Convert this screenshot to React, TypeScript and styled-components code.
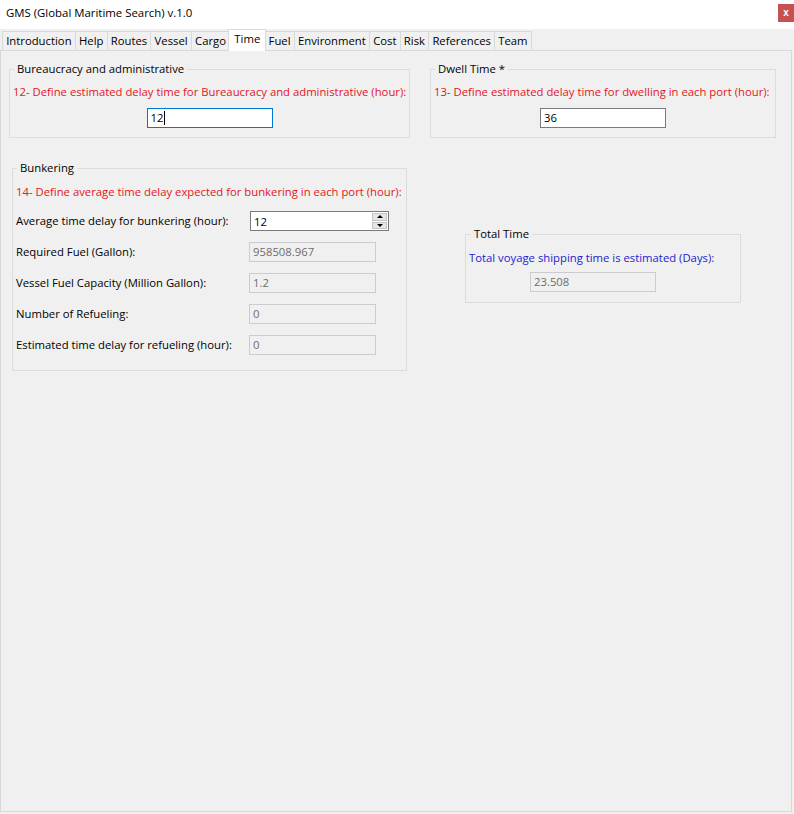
import styled, { createGlobalStyle } from 'styled-components';

const GlobalStyle = createGlobalStyle`
  html, body {
    margin: 0;
    padding: 0;
    background: #f0f0f0;
  }
  body {
    font-family: 'Open Sans', 'Liberation Sans', sans-serif;
    font-size: 11.3px;
    color: #000;
  }
`;

const Window = styled.div`
  width: 794px;
  height: 814px;
  display: flex;
  flex-direction: column;
  background: #f0f0f0;
`;

const TitleBar = styled.div`
  height: 29px;
  background: #fff;
  display: flex;
  align-items: center;
  justify-content: space-between;
  padding: 0 0 0 6px;
  box-sizing: border-box;
`;

const Caption = styled.span`
  font-size: 11.4px;
  line-height: 16px;
  margin-top: -4px;
`;

const CloseButton = styled.div`
  width: 16px;
  height: 18px;
  margin-top: -4px;
  background: #c75050;
  color: #fff;
  font-family: 'Liberation Sans', sans-serif;
  font-size: 10px;
  font-weight: bold;
  display: flex;
  align-items: center;
  justify-content: center;
`;

const TabStrip = styled.div`
  height: 21px;
  display: flex;
  align-items: flex-end;
  padding-left: 2px;
  position: relative;
  z-index: 1;
`;

const Tab = styled.div<{ $active?: boolean }>`
  height: ${({ $active }) => ($active ? 22 : 19)}px;
  margin-bottom: ${({ $active }) => ($active ? -1 : 0)}px;
  margin-left: ${({ $active }) => ($active ? -2 : -1)}px;
  margin-right: ${({ $active }) => ($active ? -1 : 0)}px;
  padding: 0 ${({ $active }) => ($active ? 5.2 : 3.2)}px;
  box-sizing: border-box;
  border: 1px solid #d9d9d9;
  border-bottom: none;
  background: ${({ $active }) => ($active ? '#fff' : '#f0f0f0')};
  line-height: ${({ $active }) => ($active ? 17 : 18)}px;
  white-space: nowrap;
  z-index: ${({ $active }) => ($active ? 2 : 1)};
  position: relative;

  &:first-child {
    margin-left: 0;
  }
`;

const Panel = styled.div`
  width: 792px;
  height: 762px;
  box-sizing: border-box;
  border: 1px solid #d9d9d9;
  display: flex;
  flex-direction: column;
`;

const Row = styled.div`
  display: flex;
  align-items: flex-start;
`;

const Group = styled.fieldset<{ $left: number; $top: number; $width: number; $height: number }>`
  margin: ${({ $top }) => $top}px 0 0 ${({ $left }) => $left}px;
  padding: 0 3px;
  width: ${({ $width }) => $width}px;
  height: ${({ $height }) => $height}px;
  box-sizing: border-box;
  border: 1px solid #dcdcdc;
  min-width: 0;
  display: flex;
  flex-direction: column;
`;

const Legend = styled.legend<{ $shift?: number }>`
  padding: 0 3px;
  margin-left: ${({ $shift }) => $shift ?? 1}px;
  line-height: 16px;
  font-size: 11.3px;
`;

const Prompt = styled.div<{ $tone: 'red' | 'blue'; $gap: number }>`
  margin-top: ${({ $gap }) => $gap}px;
  line-height: 16px;
  color: ${({ $tone }) => ($tone === 'red' ? '#e3151f' : '#1c1ccf')};
  white-space: nowrap;
`;

const TextBox = styled.div<{ $state?: 'focused' | 'normal' | 'disabled'; $width: number }>`
  width: ${({ $width }) => $width}px;
  height: 20px;
  box-sizing: border-box;
  padding: 0 3px;
  line-height: 18px;
  white-space: nowrap;
  border: 1px solid
    ${({ $state }) => ($state === 'focused' ? '#0078d7' : $state === 'disabled' ? '#cccccc' : '#7a7a7a')};
  background: ${({ $state }) => ($state === 'disabled' ? '#f0f0f0' : '#fff')};
  color: ${({ $state }) => ($state === 'disabled' ? '#6d6d6d' : '#000')};
  display: flex;
  align-items: center;
`;

const CenteredBox = styled.div<{ $gap: number }>`
  margin-top: ${({ $gap }) => $gap}px;
  display: flex;
  justify-content: center;
`;

const OffsetBox = styled.div<{ $gap: number; $left: number }>`
  margin-top: ${({ $gap }) => $gap}px;
  padding-left: ${({ $left }) => $left}px;
`;

const Caret = styled.span`
  display: inline-block;
  width: 1px;
  height: 14px;
  background: #000;
  margin-left: 1px;
`;

const FieldGrid = styled.div`
  margin-top: 11px;
  display: grid;
  grid-template-columns: 233px auto;
  row-gap: 11px;
  align-items: center;
`;

const FieldLabel = styled.div`
  line-height: 20px;
  white-space: nowrap;
`;

const SpinBox = styled.div`
  width: 139px;
  height: 20px;
  margin-left: 1px;
  box-sizing: border-box;
  border: 1px solid #7a7a7a;
  background: #fff;
  display: flex;
  justify-content: space-between;
  align-items: center;
  padding: 0 1px 0 3px;
`;

const SpinButtons = styled.div`
  width: 15px;
  height: 16px;
  display: flex;
  flex-direction: column;
  gap: 1px;
`;

const SpinButton = styled.div<{ $down?: boolean }>`
  flex: 1;
  background: #e6e6e6;
  border: 1px solid #c4c4c4;
  display: flex;
  align-items: center;
  justify-content: center;

  &::after {
    content: '';
    border-left: 3px solid transparent;
    border-right: 3px solid transparent;
    ${({ $down }) => ($down ? 'border-top: 3px solid #000;' : 'border-bottom: 3px solid #000;')}
  }
`;

const tabs = [
  'Introduction',
  'Help',
  'Routes',
  'Vessel',
  'Cargo',
  'Time',
  'Fuel',
  'Environment',
  'Cost',
  'Risk',
  'References',
  'Team',
];

const bunkerFields = [
  { label: 'Required Fuel (Gallon):', value: '958508.967' },
  { label: 'Vessel Fuel Capacity (Million Gallon):', value: '1.2' },
  { label: 'Number of Refueling:', value: '0' },
  { label: 'Estimated time delay for refueling (hour):', value: '0' },
];

const App = () => {
  return (
    <>
      <GlobalStyle />
      <Window>
        <TitleBar>
          <Caption>GMS (Global Maritime Search) v.1.0</Caption>
          <CloseButton>x</CloseButton>
        </TitleBar>
        <TabStrip>
          {tabs.map((t) => (
            <Tab key={t} $active={t === 'Time'}>
              {t}
            </Tab>
          ))}
        </TabStrip>
        <Panel>
          <Row>
            <Group $left={8} $top={10} $width={401} $height={77}>
              <Legend>Bureaucracy and administrative</Legend>
              <Prompt $tone="red" $gap={7}>
                12- Define estimated delay time for Bureaucracy and administrative (hour):
              </Prompt>
              <CenteredBox $gap={8}>
                <TextBox $state="focused" $width={126}>
                  12
                  <Caret />
                </TextBox>
              </CenteredBox>
            </Group>
            <Group $left={20} $top={10} $width={346} $height={77}>
              <Legend>Dwell Time *</Legend>
              <Prompt $tone="red" $gap={7}>
                13- Define estimated delay time for dwelling in each port (hour):
              </Prompt>
              <CenteredBox $gap={8}>
                <TextBox $width={126}>36</TextBox>
              </CenteredBox>
            </Group>
          </Row>
          <Row>
            <Group $left={11} $top={22} $width={395} $height={211}>
              <Legend>Bunkering</Legend>
              <Prompt $tone="red" $gap={8}>
                14- Define average time delay expected for bunkering in each port (hour):
              </Prompt>
              <FieldGrid>
                <FieldLabel>Average time delay for bunkering (hour):</FieldLabel>
                <SpinBox>
                  <span>12</span>
                  <SpinButtons>
                    <SpinButton />
                    <SpinButton $down />
                  </SpinButtons>
                </SpinBox>
                {bunkerFields.map((f) => [
                  <FieldLabel key={f.label}>{f.label}</FieldLabel>,
                  <TextBox key={f.label + '-value'} $state="disabled" $width={127}>
                    {f.value}
                  </TextBox>,
                ])}
              </FieldGrid>
            </Group>
            <Group $left={58} $top={88} $width={276} $height={77}>
              <Legend $shift={2}>Total Time</Legend>
              <Prompt $tone="blue" $gap={8}>
                Total voyage shipping time is estimated (Days):
              </Prompt>
              <OffsetBox $gap={6} $left={61}>
                <TextBox $state="disabled" $width={126}>
                  23.508
                </TextBox>
              </OffsetBox>
            </Group>
          </Row>
        </Panel>
      </Window>
    </>
  );
};

export default App;
